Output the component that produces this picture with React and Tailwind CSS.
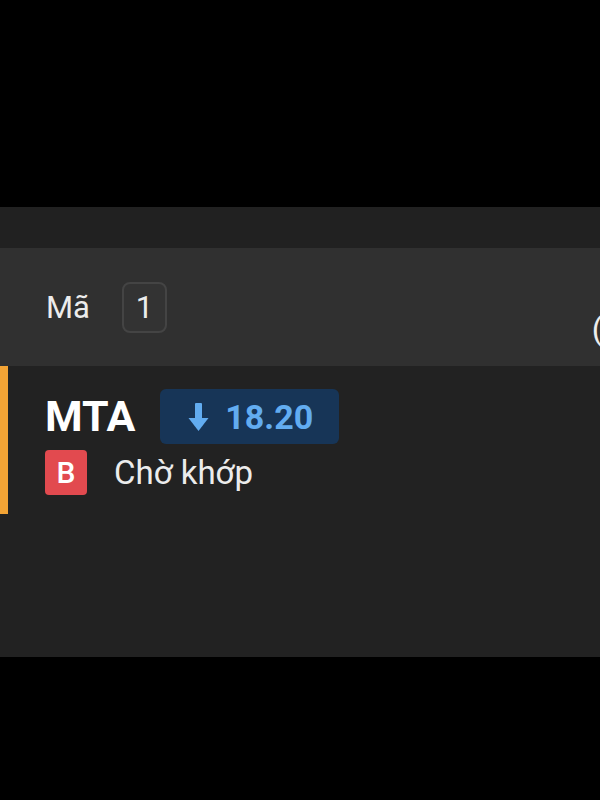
import React from "react";

function ArrowDown() {
  return (
    <svg width="21" height="28" viewBox="0 0 21 28" fill="#62acf0">
      <rect x="7" y="0" width="7" height="16" rx="1" />
      <path d="M0.5 15 H20.5 L10.5 28 Z" />
    </svg>
  );
}

export default function App() {
  return (
    <div className="w-[600px] h-[800px] bg-black flex flex-col overflow-hidden font-['Roboto',sans-serif]">
      <div className="h-[207px] shrink-0" />
      <div className="h-[41px] shrink-0 bg-[#212121]" />

      {/* header */}
      <div className="h-[118px] shrink-0 bg-[#303030] flex items-center pl-[46px] overflow-hidden">
        <span className="text-[31px] text-[#ececec] leading-none">Mã</span>
        <div className="ml-[32px] w-[45px] h-[51px] rounded-[8px] border-2 border-[#444] bg-[#333] flex items-center justify-center text-[31px] text-[#ececec] leading-none">
          1
        </div>
        <span className="ml-auto mr-[-33px] mt-[44px] text-[32px] text-[#ececec] leading-none">(đ)</span>
      </div>

      {/* order row */}
      <div className="h-[291px] shrink-0 bg-[#222] flex items-start">
        <div className="w-[8px] h-[148px] bg-[#f3a435]" />
        <div className="pl-[37px] flex flex-col">
          <div className="mt-[23px] h-[55px] flex items-center gap-[25px]">
            <span className="text-[43px] font-bold text-white leading-none">MTA</span>
            <div className="h-[55px] pl-[28px] pr-[26px] rounded-[6px] bg-[#173557] flex items-center gap-[16px]">
              <ArrowDown />
              <span className="text-[34px] font-bold text-[#62acf0] leading-none">18.20</span>
            </div>
          </div>
          <div className="mt-[6px] flex items-center gap-[27px]">
            <div className="w-[42px] h-[45px] rounded-[4px] bg-[#e24a4f] flex items-center justify-center text-[30px] font-medium text-white leading-none">
              B
            </div>
            <span className="text-[33px] text-[#ececec] leading-none">Chờ khớp</span>
          </div>
        </div>
      </div>

      <div className="flex-1 bg-black" />
    </div>
  );
}
